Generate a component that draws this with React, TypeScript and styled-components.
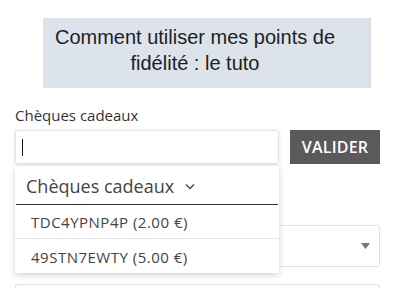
import React from "react";
import styled, { createGlobalStyle } from "styled-components";

const Global = createGlobalStyle`
  html, body { margin: 0; padding: 0; background: #fff; overflow: hidden; }
  body { font-family: "Open Sans", "Noto Sans", sans-serif; color: #333; }
  * { box-sizing: border-box; }
`;

const Page = styled.div`
  width: 402px;
  height: 288px;
  overflow: hidden;
  padding: 18px 22px 0 15px;
  display: flex;
  flex-direction: column;
  & > * { flex: none; }
`;

const Banner = styled.div`
  margin: 0 9px 0 28px;
  height: 70px;
  background: #dce3ea;
  border-right: 2px solid #d6dce2;
  display: flex;
  align-items: center;
  justify-content: center;
  padding-right: 22px;
  padding-bottom: 6px;
  font-family: "Liberation Sans", Arial, sans-serif;
  font-size: 20px;
  line-height: 26px;
  color: #1e1e1e;
  text-align: center;
`;

const Label = styled.div`
  margin-top: 17px;
  font-size: 15px;
  line-height: 20px;
  color: #333;
`;

const Row = styled.div`
  margin-top: 5px;
  display: flex;
  align-items: flex-start;
  gap: 11px;
`;

const Field = styled.div`
  position: relative;
  width: 264px;
`;

const Input = styled.div`
  height: 34px;
  border: 1px solid #e2e2e2;
  border-radius: 3px;
  background: #fff;
  box-shadow: 0 1px 4px rgba(0, 0, 0, 0.12);
  display: flex;
  align-items: center;
  padding-left: 6px;
`;

const Caret = styled.span`
  width: 1px;
  height: 17px;
  background: #111;
`;

const Button = styled.button`
  width: 90px;
  height: 34px;
  border: none;
  background: #5b5959;
  color: #fff;
  font-family: "Open Sans", "Noto Sans", sans-serif;
  font-size: 16px;
  font-weight: 600;
  letter-spacing: 0.2px;
  padding: 0;
`;

const Menu = styled.div`
  position: absolute;
  top: 36px;
  left: 0;
  width: 264px;
  background: #fff;
  box-shadow: 0 2px 6px rgba(0, 0, 0, 0.18);
  z-index: 2;
`;

const MenuHead = styled.div`
  height: 39px;
  margin: 0 1px;
  border-bottom: 1px solid #333;
  display: flex;
  align-items: center;
  gap: 11px;
  padding-left: 10px;
  padding-top: 2px;
  font-size: 18px;
  color: #444;
`;

const Item = styled.div<{ $last?: boolean }>`
  height: 34px;
  display: flex;
  align-items: center;
  padding-left: 16px;
  padding-top: 1px;
  font-size: 15px;
  letter-spacing: 0.5px;
  color: #444;
  border-bottom: ${(p) => (p.$last ? "none" : "1px solid #e6e6e6")};
`;

const Select = styled.div`
  margin-top: 61px;
  height: 42px;
  width: 365px;
  border: 1px solid #e0e0e0;
  border-radius: 3px;
  display: flex;
  align-items: center;
  justify-content: flex-end;
  padding-right: 9px;
`;

const NextBox = styled.div`
  margin-top: 17px;
  height: 30px;
  width: 365px;
  border: 1px solid #e0e0e0;
  border-radius: 3px;
`;

export default function App() {
  return (
    <>
      <Global />
      <Page>
        <Banner>
          Comment utiliser mes points de
          <br />
          fidélité : le tuto
        </Banner>
        <Label>Chèques cadeaux</Label>
        <Row>
          <Field>
            <Input>
              <Caret />
            </Input>
            <Menu>
              <MenuHead>
                Chèques cadeaux
                <svg width="10" height="7" viewBox="0 0 10 7">
                  <path d="M1 1.5l4 4 4-4" fill="none" stroke="#444" strokeWidth="1.3" />
                </svg>
              </MenuHead>
              <Item>TDC4YPNP4P (2.00 €)</Item>
              <Item $last>49STN7EWTY (5.00 €)</Item>
            </Menu>
          </Field>
          <Button>VALIDER</Button>
        </Row>
        <Select>
          <svg width="9" height="6" viewBox="0 0 9 6">
            <path d="M0 0h9L4.5 6z" fill="#777" />
          </svg>
        </Select>
        <NextBox />
      </Page>
    </>
  );
}
